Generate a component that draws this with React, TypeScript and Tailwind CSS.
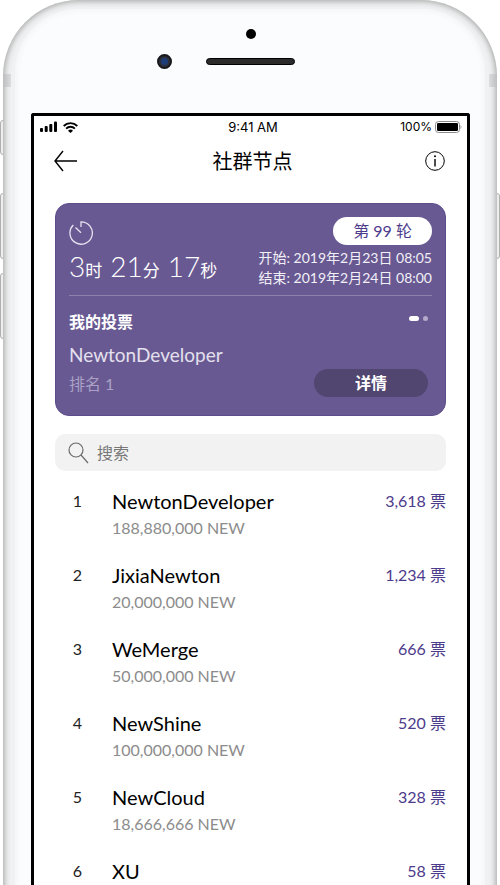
type Node = { rank: number; name: string; amount?: string; votes: string };

const nodes: Node[] = [
  { rank: 1, name: "NewtonDeveloper", amount: "188,880,000 NEW", votes: "3,618" },
  { rank: 2, name: "JixiaNewton", amount: "20,000,000 NEW", votes: "1,234" },
  { rank: 3, name: "WeMerge", amount: "50,000,000 NEW", votes: "666" },
  { rank: 4, name: "NewShine", amount: "100,000,000 NEW", votes: "520" },
  { rank: 5, name: "NewCloud", amount: "18,666,666 NEW", votes: "328" },
  { rank: 6, name: "XU", votes: "58" },
];

function SignalIcon() {
  return (
    <svg width="17" height="12" viewBox="0 0 17 12" aria-hidden="true">
      <rect x="0" y="7" width="3" height="4" rx="1" />
      <rect x="4.7" y="5" width="3" height="6" rx="1" />
      <rect x="9.3" y="3" width="3" height="8" rx="1" />
      <rect x="14" y="0.5" width="3" height="10.5" rx="1" />
    </svg>
  );
}

function WifiIcon() {
  return (
    <svg width="15" height="11" viewBox="0 0 15 11" aria-hidden="true" fill="none" stroke="black" strokeWidth="1.8">
      <path d="M.7 4a9.600 9.600 0 0 1 13.600 0" />
      <path d="M3.1 6.600a6.200 6.200 0 0 1 8.800 0" />
      <path d="M5 8.700a3.500 3.500 0 0 1 5 0L7.500 11Z" fill="black" stroke="none" />
    </svg>
  );
}

function BatteryIcon() {
  return (
    <svg width="27" height="12" viewBox="0 0 27 12" aria-hidden="true">
      <rect x="0.5" y="0.5" width="24" height="11" rx="3" fill="none" stroke="#8c8c8c" />
      <rect x="2" y="2" width="21" height="8" rx="1.300" />
      <path d="M25.500 4v4c1.300-.6 1.300-3.400 0-4Z" fill="#9a9a9a" />
    </svg>
  );
}

function StatusBar() {
  return (
    <div className="grid h-[22px] grid-cols-3 items-center pl-[6px] pr-[5px] font-['Inter','Liberation_Sans',sans-serif] text-[12px] leading-4 text-black">
      <div className="flex items-center gap-[6px]">
        <SignalIcon />
        <WifiIcon />
      </div>
      <span className="pl-1 text-center text-[13px]">9:41 AM</span>
      <div className="flex items-center justify-end gap-[3px]">
        <span>100%</span>
        <BatteryIcon />
      </div>
    </div>
  );
}

function Header() {
  return (
    <header className="flex h-[46px] items-center justify-between px-[18px]">
      <button type="button" aria-label="返回" className="flex h-7 w-8 items-center justify-start pl-px">
        <svg width="24" height="22" viewBox="0 0 24 22" fill="none" stroke="black" strokeWidth="1.4" aria-hidden="true">
          <path d="M24 11H2M10 1 2 11l8 10" />
        </svg>
      </button>
      <h1 className="text-[20px] font-normal leading-6 text-black">社群节点</h1>
      <button type="button" aria-label="信息" className="flex size-7 items-center justify-center">
        <svg width="20" height="20" viewBox="0 0 20 20" fill="none" stroke="black" aria-hidden="true">
          <circle cx="10" cy="10" r="9.300" strokeWidth="1" />
          <path d="M10 8v7.500" strokeWidth="1.400" />
          <circle cx="10" cy="5.300" r="1" fill="black" stroke="none" />
        </svg>
      </button>
    </header>
  );
}

function VoteCard() {
  return (
    <section className="rounded-[14px] border border-[#5d4c8c] bg-[#685992] px-[13px] pb-[18px] pt-[13px] text-white">
      <div className="flex items-start justify-between border-b border-[#8d81ae] pb-[7px]">
        <div className="pt-1">
          <svg width="24" height="24" viewBox="0 0 24 24" fill="none" stroke="#e6e2f0" strokeWidth="1.300" aria-hidden="true">
            <path d="M12 6V.8A11.200 11.200 0 1 1 4.300 4" />
            <path d="m6.500 6.500 5.500 5.300" />
          </svg>
          <p className="flex h-10 items-baseline gap-2 whitespace-nowrap text-[28px] font-light leading-[42px]">
            <span>3<small className="text-[17px] font-normal">时</small></span>
            <span>21<small className="text-[17px] font-normal">分</small></span>
            <span>17<small className="text-[17px] font-normal">秒</small></span>
          </p>
        </div>
        <div className="flex flex-col items-end">
          <span className="rounded-full bg-white px-5 text-[16px] leading-7 text-[#4d3b8b]">第 99 轮</span>
          <p className="mt-[3px] whitespace-nowrap text-[14px] leading-5 text-[#f2f0f7]">
            开始: 2019年2月23日 08:05
            <br />
            结束: 2019年2月24日 08:00
          </p>
        </div>
      </div>
      <div className="flex items-center justify-between pr-1 pt-[14px]">
        <h2 className="text-[16px] font-bold leading-6">我的投票</h2>
        <div className="mb-[7px] flex items-center gap-1">
          <span className="h-[5px] w-[10px] rounded-full bg-white" />
          <span className="size-[5px] rounded-full bg-[#b3abc9]" />
        </div>
      </div>
      <div className="flex items-end justify-between pr-1 pt-[9px]">
        <div>
          <p className="text-[19px] leading-6 text-[#e4e0ee]">NewtonDeveloper</p>
          <p className="mt-[3px] text-[16px] leading-[27px] text-[#aaa1c4]">排名 1</p>
        </div>
        <button type="button" className="h-7 w-[114px] rounded-full bg-[#51466f] text-[16px] font-bold leading-7">
          详情
        </button>
      </div>
    </section>
  );
}

function SearchBox() {
  return (
    <label className="mt-[18px] flex h-[37px] items-center gap-2 rounded-[10px] bg-[#f2f2f2] px-[13px]">
      <svg width="21" height="22" viewBox="0 0 21 22" fill="none" stroke="#6b6b6b" strokeWidth="1.200" aria-hidden="true">
        <circle cx="8" cy="8" r="7" />
        <path d="m13 13 7 8" />
      </svg>
      <input
        type="search"
        aria-label="搜索"
        placeholder="搜索"
        className="min-w-0 flex-1 bg-transparent text-[16px] leading-6 outline-none placeholder:text-[#777777]"
      />
    </label>
  );
}

function NodeRow({ rank, name, amount, votes }: Node) {
  return (
    <li className="flex h-[74px] items-start">
      <span className="w-[45px] text-center text-[16px] leading-7 text-[#222222]">{rank}</span>
      <div className="min-w-0 flex-1 pl-[12px]">
        <p className="text-[20px] leading-7 text-black">{name}</p>
        {amount && <p className="text-[16px] leading-[26px] text-[#8c8c8c]">{amount}</p>}
      </div>
      <span className="text-[16px] leading-7 text-[#4d3b8b]">{votes} 票</span>
    </li>
  );
}

export default function App() {
  return (
    <div className="relative h-screen overflow-hidden bg-white px-[3px] font-['Lato','Noto_Sans_CJK_SC',sans-serif]">
      <span className="absolute left-0 top-[120px] h-[35px] w-2 rounded-l-[3px] border border-[#b0b0b0] bg-[#eeeeee]" />
      <span className="absolute left-0 top-[193px] h-[66px] w-2 rounded-l-[3px] border border-[#b0b0b0] bg-[#eeeeee]" />
      <span className="absolute left-0 top-[273px] h-[66px] w-2 rounded-l-[3px] border border-[#b0b0b0] bg-[#eeeeee]" />
      <span className="absolute right-0 top-[193px] h-[66px] w-2 rounded-r-[3px] border border-[#b0b0b0] bg-[#eeeeee]" />

      <div className="relative flex min-h-[calc(100%+80px)] flex-col rounded-t-[76px] bg-[#f0f1f2] px-3 pt-[9px] shadow-[inset_0_0_6px_1px_#9c9c9c]">
        <span className="absolute left-0 top-[74px] h-[13px] w-2 bg-linear-to-r from-[#bdbebf] to-[#dcddde]" />
        <span className="absolute right-0 top-[74px] h-[13px] w-2 bg-linear-to-l from-[#bdbebf] to-[#dcddde]" />

        <div className="flex flex-1 flex-col rounded-t-[64px] bg-[#fbfcfe] pl-4 pr-[15px] pt-[20px] shadow-[inset_0_0_5px_2px_#f4f5f6]">
          <div className="flex h-[84px] flex-col items-center">
            <span className="size-[10px] rounded-full bg-black" />
            <div className="mt-[15px] flex items-center gap-[34px]">
              <span className="flex size-[15px] items-center justify-center rounded-full border-2 border-[#15171c] bg-[#2c2f38]">
                <span className="size-[7px] rounded-full bg-[#1c3d78]" />
              </span>
              <span className="h-[7px] w-[89px] rounded-full border border-black bg-[#2b2b2b]" />
              <span className="w-[15px]" />
            </div>
          </div>

          <main className="flex-1 rounded-t-[3px] border-[3px] border-b-0 border-black bg-white">
            <StatusBar />
            <Header />
            <div className="px-[21px] pt-[19px]">
              <VoteCard />
              <SearchBox />
              <ol className="pt-4">
                {nodes.map((node) => (
                  <NodeRow key={node.rank} {...node} />
                ))}
              </ol>
            </div>
          </main>
        </div>
      </div>
    </div>
  );
}
